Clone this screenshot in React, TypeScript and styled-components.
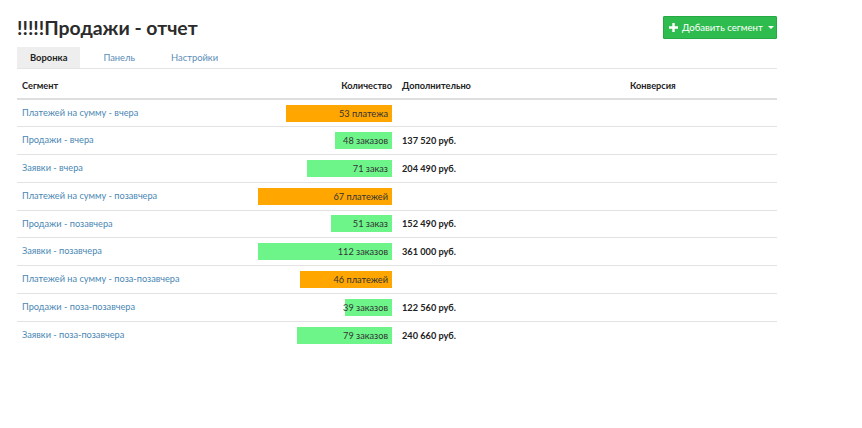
import React from 'react'
import styled, { createGlobalStyle } from 'styled-components'

const GlobalStyle = createGlobalStyle`
  body {
    margin: 0;
    background: #fff;
    font-family: Lato, 'Open Sans', sans-serif;
    color: #333;
  }
`

const Page = styled.div`
  width: 760px;
  padding: 16px 0 0 17px;
`

const Header = styled.div`
  display: flex;
  justify-content: space-between;
  align-items: flex-start;
  height: 31px;
`

const Title = styled.h1`
  margin: 0;
  padding-top: 1px;
  font-size: 19.4px;
  font-weight: 700;
  color: #2b2b2b;
  line-height: 22px;
`

const AddButton = styled.button`
  display: flex;
  align-items: center;
  gap: 4px;
  height: 23px;
  width: 114px;
  padding: 0 0 0 5px;
  border: 1px solid #26a844;
  border-radius: 1px;
  background: #2ebc4f;
  color: #fff;
  font-family: inherit;
  font-size: 9.6px;
  white-space: nowrap;
`

const Caret = styled.span`
  width: 0;
  height: 0;
  margin-left: 1px;
  border-left: 3px solid transparent;
  border-right: 3px solid transparent;
  border-top: 3px solid #fff;
`

const Tabs = styled.div`
  display: flex;
  border-bottom: 1px solid #e4e4e4;
`

const Tab = styled.div<{ $active?: boolean }>`
  height: 21px;
  line-height: 21px;
  padding: 0 13px;
  margin-right: 10px;
  font-size: 9.4px;
  font-weight: ${p => (p.$active ? 700 : 400)};
  color: ${p => (p.$active ? '#222' : '#5b8db8')};
  background: ${p => (p.$active ? '#eeeeee' : 'transparent')};
`

const Table = styled.table`
  width: 760px;
  border-collapse: collapse;
  table-layout: fixed;
  font-size: 9.2px;
`

const HeadCell = styled.th<{ $right?: boolean }>`
  height: 22px;
  padding: 0 5px 7px;
  vertical-align: bottom;
  text-align: ${p => (p.$right ? 'right' : 'left')};
  font-weight: 700;
  color: #222;
  border-bottom: 2px solid #dedede;
`

const Row = styled.tr`
  height: 27.75px;
  border-bottom: 1px solid #e2e2e2;
  &:last-child {
    border-bottom: none;
  }
`

const Cell = styled.td`
  padding: 0 5px;
  vertical-align: middle;
`

const SegmentCell = styled.td`
  padding: 7px 5px 0;
  vertical-align: top;
`

const SegmentLink = styled.a`
  color: #4a87b4;
  text-decoration: none;
`

const BarCell = styled.td`
  padding: 0;
  vertical-align: middle;
`

const BarWrap = styled.div`
  display: flex;
  justify-content: flex-end;
  padding-right: 5px;
`

const Bar = styled.div<{ $kind: 'pay' | 'order' }>`
  display: flex;
  justify-content: flex-end;
  align-items: center;
  height: 17px;
  padding-right: 4px;
  box-sizing: border-box;
  white-space: nowrap;
  color: #333;
  background: ${p => (p.$kind === 'pay' ? '#ffa600' : '#6df58a')};
`

const Amount = styled.span`
  font-weight: 700;
  color: #222;
`

type Item = { name: string; count: number; label: string; kind: 'pay' | 'order'; sum?: string }

const items: Item[] = [
  { name: 'Платежей на сумму - вчера', count: 53, label: '53 платежа', kind: 'pay' },
  { name: 'Продажи - вчера', count: 48, label: '48 заказов', kind: 'order', sum: '137 520 руб.' },
  { name: 'Заявки - вчера', count: 71, label: '71 заказ', kind: 'order', sum: '204 490 руб.' },
  { name: 'Платежей на сумму - позавчера', count: 67, label: '67 платежей', kind: 'pay' },
  { name: 'Продажи - позавчера', count: 51, label: '51 заказ', kind: 'order', sum: '152 490 руб.' },
  { name: 'Заявки - позавчера', count: 112, label: '112 заказов', kind: 'order', sum: '361 000 руб.' },
  { name: 'Платежей на сумму - поза-позавчера', count: 46, label: '46 платежей', kind: 'pay' },
  { name: 'Продажи - поза-позавчера', count: 39, label: '39 заказов', kind: 'order', sum: '122 560 руб.' },
  { name: 'Заявки - поза-позавчера', count: 79, label: '79 заказов', kind: 'order', sum: '240 660 руб.' },
]

const maxBy = (kind: string) => Math.max(...items.filter(i => i.kind === kind).map(i => i.count))
const BAR_MAX = 134

const PlusIcon = () => (
  <svg width="9" height="9" viewBox="0 0 9 9">
    <path d="M3.3 0h2.4v3.3H9v2.4H5.7V9H3.3V5.7H0V3.3h3.3z" fill="#fff" />
  </svg>
)

const App: React.FC = () => {
  return (
    <>
      <GlobalStyle />
      <Page>
        <Header>
          <Title>!!!!!Продажи - отчет</Title>
          <AddButton>
            <PlusIcon />
            Добавить сегмент
            <Caret />
          </AddButton>
        </Header>
        <Tabs>
          <Tab $active>Воронка</Tab>
          <Tab>Панель</Tab>
          <Tab>Настройки</Tab>
        </Tabs>
        <Table>
          <colgroup>
            <col style={{ width: 233 }} />
            <col style={{ width: 147 }} />
            <col style={{ width: 228 }} />
            <col style={{ width: 152 }} />
          </colgroup>
          <thead>
            <tr>
              <HeadCell>Сегмент</HeadCell>
              <HeadCell $right>Количество</HeadCell>
              <HeadCell>Дополнительно</HeadCell>
              <HeadCell>Конверсия</HeadCell>
            </tr>
          </thead>
          <tbody>
            {items.map(item => (
              <Row key={item.name}>
                <SegmentCell>
                  <SegmentLink href="#">{item.name}</SegmentLink>
                </SegmentCell>
                <BarCell>
                  <BarWrap>
                    <Bar $kind={item.kind} style={{ width: Math.round((item.count / maxBy(item.kind)) * BAR_MAX) }}>
                      {item.label}
                    </Bar>
                  </BarWrap>
                </BarCell>
                <Cell>{item.sum && <Amount>{item.sum}</Amount>}</Cell>
                <Cell />
              </Row>
            ))}
          </tbody>
        </Table>
      </Page>
    </>
  )
}

export default App
